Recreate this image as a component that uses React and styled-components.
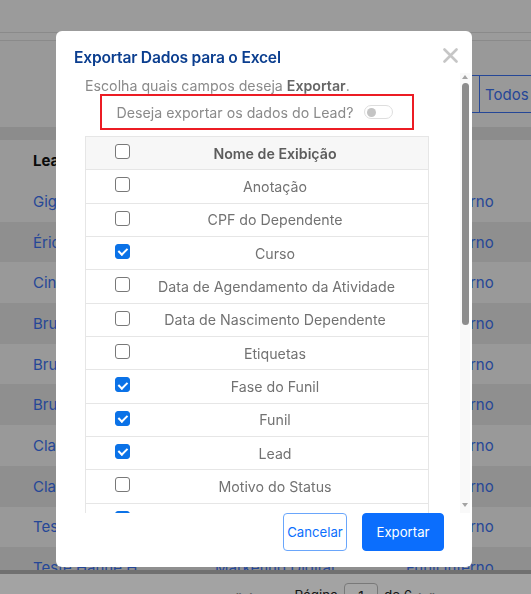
import React, { useState, useRef, useEffect } from 'react';
import styled, { createGlobalStyle } from 'styled-components';

const GlobalStyle = createGlobalStyle`
  html, body {
    margin: 0;
    padding: 0;
  }
  body {
    width: 531px;
    height: 594px;
    overflow: hidden;
    background: #fbfbfb;
    font-family: Inter, "Noto Sans", sans-serif;
  }
`;

/* ---------- page behind the modal ---------- */

const Page = styled.div`
  width: 531px;
  height: 594px;
  display: flex;
  flex-direction: column;
  overflow: hidden;
  background: #ececec;
`;

const NavBar = styled.div`
  height: 32px;
  flex-shrink: 0;
  background: #eeeeee;
  border-bottom: 1px solid #d4d4d4;
`;

const SubBar = styled.div`
  height: 7px;
  flex-shrink: 0;
  background: #eeeeee;
  border-bottom: 1px solid #d4d4d4;
`;

const Toolbar = styled.div`
  height: 86px;
  flex-shrink: 0;
  box-sizing: border-box;
  padding: 34px 0 0 380px;
  display: flex;
  align-items: flex-start;
  white-space: nowrap;
`;

const ButtonGroup = styled.div`
  display: flex;
  border: 1px solid #3a6ee8;
  border-radius: 4px;
  height: 38px;
  box-sizing: border-box;
`;

const GroupButton = styled.button`
  border: none;
  border-left: ${(p) => (p.divided ? '1px solid #3a6ee8' : 'none')};
  background: transparent;
  color: #3a6ee8;
  font: 400 15px Inter, sans-serif;
  text-align: left;
  padding: 0 ${(p) => (p.divided ? '5px' : '4px')};
  width: ${(p) => (p.divided ? 'auto' : '98px')};
`;

const LeadsTable = styled.div`
  flex: 1;
  overflow: hidden;
  border-top: 13px solid #d8d8d8;
  background: #ebebeb;
`;

const LeadsRow = styled.div`
  display: grid;
  grid-template-columns: 182px 1fr 125px;
  align-items: center;
  height: ${(p) => (p.head ? '41px' : '40.7px')};
  padding: 0 0 0 33px;
  background: ${(p) => (p.striped ? '#dcdcdc' : '#ebebeb')};
  font-size: 15px;
  color: ${(p) => (p.head ? '#111' : '#3a6ee8')};
  font-weight: ${(p) => (p.head ? 700 : 400)};
  white-space: nowrap;
`;

const PageFooter = styled.div`
  flex-shrink: 0;
  height: 24px;
  box-sizing: border-box;
  border-top: 4px solid #acacac;
  background: #fbfbfb;
  display: flex;
  align-items: flex-start;
  gap: 6px;
  padding: 13px 0 0 234px;
  font-size: 13.5px;
  color: #222;
  white-space: nowrap;
`;

const PagerArrow = styled.span`
  color: #888;
  font-size: 13px;
`;

const PageLabel = styled.span`
  margin-left: ${(p) => p.offset || 0}px;
`;

const PageBox = styled.span`
  display: inline-block;
  width: 34px;
  height: 26px;
  margin-top: -4px;
  padding-top: 4px;
  box-sizing: border-box;
  border: 1px solid #bbb;
  border-radius: 4px;
  text-align: center;
  background: #fff;
`;

/* ---------- modal ---------- */

const Overlay = styled.div`
  position: fixed;
  inset: 0;
  background: rgba(0, 0, 0, 0.35);
  padding: 31px 0 0 56px;
`;

const Modal = styled.div`
  width: 416px;
  height: 536px;
  background: #fff;
  border-radius: 6px;
  display: flex;
  flex-direction: column;
  overflow: hidden;
`;

const ModalHeader = styled.div`
  display: flex;
  justify-content: space-between;
  align-items: center;
  padding: 15px 14px 3px 18px;
  height: 24px;
`;

const Title = styled.h5`
  margin: 0;
  font: 600 15.6px/24px Inter, sans-serif;
  color: #0b3e8f;
  letter-spacing: -0.2px;
`;

const CloseButton = styled.button`
  border: none;
  background: none;
  padding: 0;
  width: 15px;
  height: 15px;
  margin-top: -5px;
  cursor: pointer;
  display: flex;
`;

const BodyWrap = styled.div`
  position: relative;
  height: 440px;
  flex-shrink: 0;
`;

const ModalBody = styled.div`
  height: 100%;
  overflow-y: auto;
  padding: 4px 43px 0 29px;
  box-sizing: border-box;
  scrollbar-width: none;

  &::-webkit-scrollbar {
    display: none;
  }
`;

const ScrollTrack = styled.div`
  position: absolute;
  top: 0;
  bottom: 0;
  right: 2px;
  width: 10px;
  background: #f9f9f9;
`;

const ScrollArrow = styled.span`
  position: absolute;
  left: 1.5px;
  ${(p) => (p.down ? 'bottom: 6px;' : 'top: 2px;')}
  width: 0;
  height: 0;
  border-left: 3.5px solid transparent;
  border-right: 3.5px solid transparent;
  ${(p) => (p.down ? 'border-top' : 'border-bottom')}: 4px solid #a3a3a3;
`;

const ScrollThumb = styled.div`
  position: absolute;
  left: 1.5px;
  width: 7px;
  border-radius: 4px;
  background: #8c8c8c;
`;

const Description = styled.p`
  margin: 0;
  font-size: 14.2px;
  line-height: 17px;
  color: #8a8a8a;

  strong {
    color: #666;
    font-weight: 600;
  }
`;

const LeadOption = styled.label`
  width: 314px;
  height: 36px;
  box-sizing: border-box;
  margin: 0 auto;
  border: 2px solid #ec1c24;
  display: flex;
  align-items: center;
  justify-content: center;
  gap: 11px;
  padding-right: 4px;
  font-size: 14.2px;
  color: #8a8a8a;
  cursor: pointer;
`;

const Switch = styled.span`
  position: relative;
  width: 29px;
  height: 14px;
  box-sizing: border-box;
  border: 1px solid #dedede;
  border-radius: 7px;
  background: ${(p) => (p.on ? '#0b72e7' : '#fff')};

  &::after {
    content: '';
    position: absolute;
    top: 1.5px;
    left: ${(p) => (p.on ? '16px' : '2px')};
    width: 9px;
    height: 9px;
    border-radius: 50%;
    background: ${(p) => (p.on ? '#fff' : '#c4c4c4')};
  }
`;

const FieldTable = styled.div`
  margin-top: 6px;
  border: 1px solid #e6e6e6;
  border-bottom: none;
`;

const FieldRow = styled.div`
  display: grid;
  grid-template-columns: 72px 1fr;
  align-items: center;
  height: 33.33px;
  box-sizing: border-box;
  border-bottom: 1px solid #e6e6e6;
  background: ${(p) => (p.head ? '#f7f7f7' : '#fff')};
`;

const CheckCell = styled.div`
  display: flex;
  justify-content: center;
`;

const NameCell = styled.div`
  text-align: center;
  padding-right: 36px;
  font-size: 14.2px;
  font-weight: ${(p) => (p.head ? 600 : 400)};
  color: ${(p) => (p.head ? '#5c5c5c' : '#727272')};
  white-space: nowrap;
`;

const Check = styled.input.attrs({ type: 'checkbox' })`
  appearance: none;
  position: relative;
  box-sizing: border-box;
  width: 15px;
  height: 15px;
  margin: 0 0 3px;
  border: 1.3px solid #787878;
  border-radius: 3px;
  background: #fff;
  cursor: pointer;

  &:checked {
    background: #0b72e7;
    border-color: #0b72e7;
  }
  &:checked::after {
    content: '';
    position: absolute;
    left: 4.2px;
    top: 1.2px;
    width: 3.5px;
    height: 7px;
    border: solid #fff;
    border-width: 0 2.2px 2.2px 0;
    transform: rotate(45deg);
  }
`;

const ModalFooter = styled.div`
  display: flex;
  justify-content: flex-end;
  gap: 15px;
  padding: 0 28px 16px;
`;

const FooterButton = styled.button`
  height: 38px;
  width: ${(p) => (p.primary ? '82px' : '64px')};
  padding: 0;
  box-sizing: border-box;
  border-radius: 4px;
  font: 400 13.2px Inter, sans-serif;
  cursor: pointer;
  border: 1px solid ${(p) => (p.primary ? '#0b6efd' : '#6aa6fb')};
  background: ${(p) => (p.primary ? '#0b6efd' : '#fff')};
  color: ${(p) => (p.primary ? '#fff' : '#0b6efd')};
`;

const leads = [
  'Gigi Souza',
  'Érica Lima',
  'Cintia Alves',
  'Bruno Costa',
  'Bruna Melo',
  'Bruno Dias',
  'Claudia Reis',
  'Claudio Neto',
  'Teste Nome',
  'Teste Hanne H',
];

const initialFields = [
  { name: 'Anotação', checked: false },
  { name: 'CPF do Dependente', checked: false },
  { name: 'Curso', checked: true },
  { name: 'Data de Agendamento da Atividade', checked: false },
  { name: 'Data de Nascimento Dependente', checked: false },
  { name: 'Etiquetas', checked: false },
  { name: 'Fase do Funil', checked: true },
  { name: 'Funil', checked: true },
  { name: 'Lead', checked: true },
  { name: 'Motivo do Status', checked: false },
  { name: 'Origem', checked: true },
  { name: 'Produto', checked: false },
  { name: 'Responsável', checked: true },
  { name: 'Status', checked: true },
  { name: 'Telefone', checked: true },
  { name: 'Tipo de Atividade', checked: false },
  { name: 'Turma', checked: false },
  { name: 'Unidade', checked: true },
  { name: 'Valor', checked: false },
  { name: 'WhatsApp', checked: false },
];

const ARROW_SPACE = 10;

const App = () => {
  const [fields, setFields] = useState(initialFields);
  const [exportLead, setExportLead] = useState(false);
  const [thumb, setThumb] = useState({ top: ARROW_SPACE, height: 0 });
  const bodyRef = useRef(null);

  const allChecked = fields.every((f) => f.checked);

  const updateThumb = () => {
    const el = bodyRef.current;
    if (!el) return;
    const track = el.clientHeight - ARROW_SPACE * 2;
    const height = Math.max(20, (track * el.clientHeight) / el.scrollHeight);
    const maxScroll = el.scrollHeight - el.clientHeight || 1;
    const top = ARROW_SPACE + ((track - height) * el.scrollTop) / maxScroll;
    setThumb({ top, height });
  };

  useEffect(() => {
    updateThumb();
  }, []);

  const toggleField = (index) => {
    setFields(fields.map((f, i) => (i === index ? { ...f, checked: !f.checked } : f)));
  };

  const toggleAll = () => {
    setFields(fields.map((f) => ({ ...f, checked: !allChecked })));
  };

  return (
    <>
      <GlobalStyle />
      <Page>
        <NavBar />
        <SubBar />
        <Toolbar>
          <ButtonGroup>
            <GroupButton>Meus leads</GroupButton>
            <GroupButton divided>Todos os leads</GroupButton>
          </ButtonGroup>
        </Toolbar>
        <LeadsTable>
          <LeadsRow head>
            <span>Lead</span>
            <span>Origem</span>
            <span>Funil</span>
          </LeadsRow>
          {leads.map((name, i) => (
            <LeadsRow key={name} striped={i % 2 === 1}>
              <span>{name}</span>
              <span>Marketing Digital</span>
              <span>Funil Interno</span>
            </LeadsRow>
          ))}
        </LeadsTable>
        <PageFooter>
          <PagerArrow>«</PagerArrow>
          <PagerArrow>‹</PagerArrow>
          <PageLabel offset={36}>Página</PageLabel>
          <PageBox>1</PageBox>
          <PageLabel>de 6</PageLabel>
          <PagerArrow>›</PagerArrow>
          <PagerArrow>»</PagerArrow>
        </PageFooter>
      </Page>

      <Overlay>
        <Modal>
          <ModalHeader>
            <Title>Exportar Dados para o Excel</Title>
            <CloseButton aria-label="Fechar">
              <svg width="15" height="15" viewBox="0 0 15 15">
                <path d="M1.5 1.5 L13.5 13.5 M13.5 1.5 L1.5 13.5" stroke="#c6c6c6" strokeWidth="2.6" strokeLinecap="round" />
              </svg>
            </CloseButton>
          </ModalHeader>
          <BodyWrap>
            <ModalBody ref={bodyRef} onScroll={updateThumb}>
              <Description>
                Escolha quais campos deseja <strong>Exportar</strong>.
              </Description>
              <LeadOption onClick={() => setExportLead(!exportLead)}>
                <span>Deseja exportar os dados do Lead?</span>
                <Switch on={exportLead} />
              </LeadOption>
              <FieldTable>
                <FieldRow head>
                  <CheckCell>
                    <Check checked={allChecked} onChange={toggleAll} />
                  </CheckCell>
                  <NameCell head>Nome de Exibição</NameCell>
                </FieldRow>
                {fields.map((f, i) => (
                  <FieldRow key={f.name}>
                    <CheckCell>
                      <Check checked={f.checked} onChange={() => toggleField(i)} />
                    </CheckCell>
                    <NameCell>{f.name}</NameCell>
                  </FieldRow>
                ))}
              </FieldTable>
            </ModalBody>
            <ScrollTrack>
              <ScrollArrow />
              <ScrollThumb style={{ top: thumb.top, height: thumb.height }} />
              <ScrollArrow down />
            </ScrollTrack>
          </BodyWrap>
          <ModalFooter>
            <FooterButton>Cancelar</FooterButton>
            <FooterButton primary>Exportar</FooterButton>
          </ModalFooter>
        </Modal>
      </Overlay>
    </>
  );
};

export default App;
